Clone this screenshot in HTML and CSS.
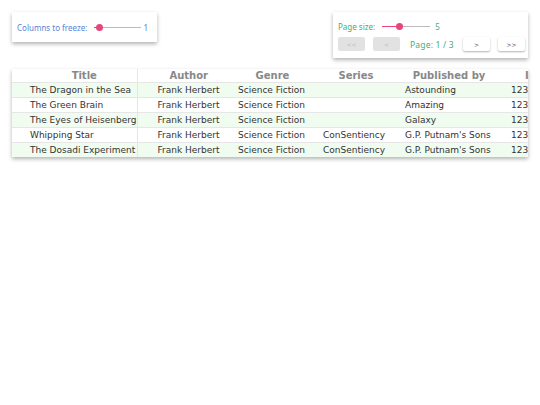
FILE: index.html
```html
<!DOCTYPE html>
<html lang="en">
  <head>
    <meta charset="utf-8" />
    <title>Books</title>
    <link rel="stylesheet" href="styles.css">
  </head>
  <body>
    <div class="app">
      <div class="controls">
        <div class="panel freeze-panel">
          <span class="label">Columns to freeze:</span>
          <div class="slider slider-freeze">
            <div class="fill" style="width: 5px"></div>
            <div class="thumb"></div>
            <div class="rest"></div>
          </div>
          <span class="value">1</span>
        </div>

        <div class="panel pager-panel">
          <div class="pager-row">
            <span class="label">Page size:</span>
            <div class="slider slider-size">
              <div class="fill" style="width: 17px"></div>
              <div class="thumb"></div>
              <div class="rest"></div>
            </div>
            <span class="value">5</span>
          </div>
          <div class="pager-row buttons">
            <button class="page-btn" disabled>&lt;&lt;</button>
            <button class="page-btn" disabled>&lt;</button>
            <span class="page-info">Page: 1 / 3</span>
            <button class="page-btn">&gt;</button>
            <button class="page-btn">&gt;&gt;</button>
          </div>
        </div>
      </div>

      <div class="table-wrap">
        <table class="books">
          <thead>
            <tr>
              <th class="col-title">Title</th>
              <th class="col-author">Author</th>
              <th class="col-genre">Genre</th>
              <th class="col-series">Series</th>
              <th class="col-pub">Published by</th>
              <th class="col-isbn">ISBN</th>
            </tr>
          </thead>
          <tbody>
            <tr>
              <td class="col-title">The Dragon in the Sea</td>
              <td class="col-author">Frank Herbert</td>
              <td class="col-genre">Science Fiction</td>
              <td class="col-series"></td>
              <td class="col-pub">Astounding</td>
              <td class="col-isbn">1234567890</td>
            </tr>
            <tr>
              <td class="col-title">The Green Brain</td>
              <td class="col-author">Frank Herbert</td>
              <td class="col-genre">Science Fiction</td>
              <td class="col-series"></td>
              <td class="col-pub">Amazing</td>
              <td class="col-isbn">1234567890</td>
            </tr>
            <tr>
              <td class="col-title">The Eyes of Heisenberg</td>
              <td class="col-author">Frank Herbert</td>
              <td class="col-genre">Science Fiction</td>
              <td class="col-series"></td>
              <td class="col-pub">Galaxy</td>
              <td class="col-isbn">1234567890</td>
            </tr>
            <tr>
              <td class="col-title">Whipping Star</td>
              <td class="col-author">Frank Herbert</td>
              <td class="col-genre">Science Fiction</td>
              <td class="col-series">ConSentiency</td>
              <td class="col-pub">G.P. Putnam's Sons</td>
              <td class="col-isbn">1234567890</td>
            </tr>
            <tr>
              <td class="col-title">The Dosadi Experiment</td>
              <td class="col-author">Frank Herbert</td>
              <td class="col-genre">Science Fiction</td>
              <td class="col-series">ConSentiency</td>
              <td class="col-pub">G.P. Putnam's Sons</td>
              <td class="col-isbn">1234567890</td>
            </tr>
          </tbody>
        </table>
      </div>
    </div>
  </body>
</html>
```

FILE: styles.css
```css
* {
  margin: 0;
  padding: 0;
  box-sizing: border-box;
}

body {
  font-family: 'Noto Sans', sans-serif;
  background: white;
  color: #333;
}

.app {
  padding: 12px;
}

.controls {
  display: flex;
  justify-content: space-between;
  align-items: flex-start;
}

.panel {
  background: white;
  box-shadow: 0 2px 4px rgba(0, 0, 0, 0.3);
  font-size: 8px;
}

.freeze-panel {
  width: 145px;
  height: 30px;
  display: flex;
  align-items: center;
  padding: 0 9px 0 5px;
  color: #5b84d6;
}

.pager-panel {
  width: 195px;
  height: 46px;
  padding: 7px 0 0 5px;
  color: #3fae7a;
}

.pager-row {
  display: flex;
  align-items: center;
  height: 14px;
  white-space: nowrap;
}

.pager-row.buttons {
  margin-top: 4px;
}

.slider {
  display: flex;
  align-items: center;
  height: 8px;
}

.slider .fill {
  height: 1px;
  background: #e8457e;
}

.slider .rest {
  flex: 1;
  height: 1px;
  background: #bbb;
}

.slider .thumb {
  width: 7px;
  height: 7px;
  margin: 0 -3px;
  border-radius: 50%;
  background: #e8457e;
  position: relative;
}

.slider-freeze {
  width: 47px;
  margin-left: 7px;
}

.slider-size {
  width: 48px;
  margin-left: 7px;
}

.freeze-panel .value {
  margin-left: auto;
}

.pager-panel .value {
  margin-left: 5px;
}

.page-btn {
  flex-shrink: 0;
  width: 27px;
  height: 14px;
  border: none;
  border-radius: 2px;
  background: white;
  color: #444;
  font-family: 'DejaVu Sans', sans-serif;
  font-size: 6px;
  box-shadow: 0 1px 2px rgba(0, 0, 0, 0.3);
  margin-right: 8px;
}

.page-btn:disabled {
  background: #e2e2e2;
  color: #bbb;
  box-shadow: none;
}

.page-btn:last-child {
  margin-right: 0;
}

.page-info {
  flex-shrink: 0;
  margin: 0 9px 0 2px;
  font-size: 8.5px;
  letter-spacing: 0.2px;
}

.table-wrap {
  margin-top: 11px;
  width: 516px;
  overflow: hidden;
  box-shadow: 0 2px 4px rgba(0, 0, 0, 0.3);
}

.books {
  width: 569px;
  border-collapse: collapse;
  table-layout: fixed;
  font-family: 'DejaVu Sans', Verdana, sans-serif;
  font-size: 9px;
  white-space: nowrap;
}

.books th {
  height: 13px;
  font-size: 10px;
  color: #888;
  font-weight: bold;
  text-align: center;
  background: white;
}

.books td {
  height: 15px;
  border-top: 1px solid #e6e6e6;
  padding-left: 8px;
  overflow: hidden;
}

.books tbody tr:nth-child(odd) {
  background: #f1fcf1;
}

.books .col-title {
  width: 125px;
  border-right: 1px solid #dce9f5;
}

.books th.col-title {
  padding-left: 20px;
}

.books td.col-title {
  padding-left: 18px;
}

.books .col-author {
  width: 93px;
}

.books td.col-author {
  padding-left: 20px;
}

.books th.col-author {
  padding-left: 10px;
}

.books .col-genre {
  width: 85px;
}

.books .col-series {
  width: 82px;
}

.books .col-pub {
  width: 104px;
}

.books .col-isbn {
  width: 80px;
}

.books td.col-isbn {
  padding-left: 10px;
}

.books th.col-isbn {
  text-align: left;
  padding-left: 24px;
}
```
